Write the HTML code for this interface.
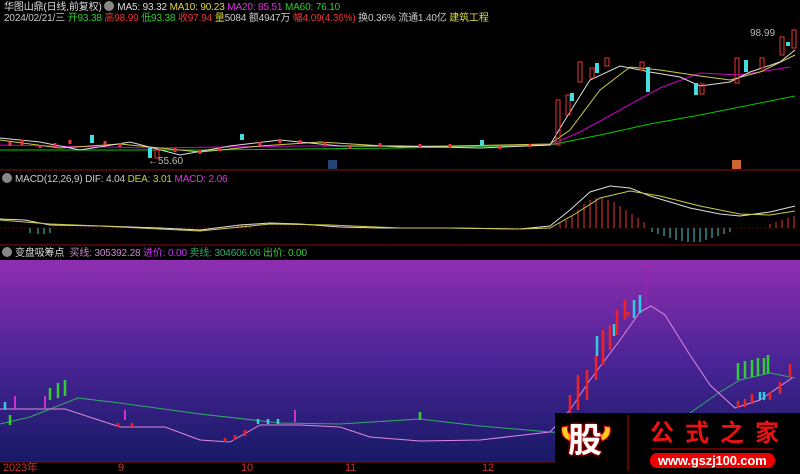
<!DOCTYPE html>
<html><head><meta charset="utf-8"><style>
body{margin:0;width:800px;height:473px;background:#000;overflow:hidden;position:relative;font-family:"Liberation Sans","Noto Sans CJK SC",sans-serif;font-size:10px;color:#ccc}
.t{position:absolute;white-space:nowrap;line-height:12px;letter-spacing:-0.15px}
.ic{display:inline-block;width:10px;height:10px;border-radius:50%;background:#888;vertical-align:-1px;margin-right:3px}
</style></head><body>
<svg width="800" height="473" style="position:absolute;left:0;top:0">
<defs><linearGradient id="g" x1="0" y1="0" x2="0" y2="1"><stop offset="0" stop-color="#8e2eb0"/><stop offset="0.5" stop-color="#4a2496"/><stop offset="1" stop-color="#171a66"/></linearGradient></defs>
<line x1="0" y1="170" x2="800" y2="170" stroke="#8a1010"/>
<line x1="0" y1="245" x2="800" y2="245" stroke="#8a1010"/>
<rect x="0" y="260" width="800" height="202" fill="url(#g)"/>
<line x1="0" y1="462" x2="800" y2="462" stroke="#8a1010"/>
<polyline fill="none" stroke="#0c0" points="0,150 200,150 400,148 550,145 600,135 650,124 700,115 750,105 795,96"/>
<polyline fill="none" stroke="#c0c" points="0,145 150,148 300,146 450,146 550,145 580,132 620,110 660,88 700,73 740,75 790,67"/>
<polyline fill="none" stroke="#cc4" points="0,140 60,148 120,144 200,152 260,146 320,142 400,147 550,144 570,130 600,90 630,67 660,70 700,76 730,80 760,72 795,55"/>
<polyline fill="none" stroke="#ddd" points="0,138 40,142 80,150 130,142 180,155 230,146 280,140 340,146 400,146 480,148 550,145 565,120 590,80 620,66 650,72 680,77 700,86 730,82 750,72 780,62 795,50"/>
<g stroke="#e33" fill="none">
<rect x="556" y="100" width="4" height="45"/><rect x="566" y="95" width="4" height="20"/><rect x="578" y="62" width="4" height="20"/><rect x="590" y="68" width="4" height="10"/><rect x="605" y="58" width="4" height="8"/><rect x="640" y="62" width="4" height="8"/><rect x="700" y="84" width="4" height="10"/><rect x="735" y="58" width="4" height="25"/><rect x="760" y="58" width="4" height="10"/><rect x="780" y="37" width="4" height="18"/><rect x="792" y="30" width="4" height="18"/><rect x="155" y="150" width="4" height="8"/>
</g>
<g fill="#4dd"><rect x="570" y="93" width="4" height="8"/><rect x="595" y="63" width="4" height="10"/><rect x="646" y="67" width="4" height="25"/><rect x="694" y="83" width="4" height="12"/><rect x="744" y="60" width="4" height="12"/><rect x="786" y="42" width="4" height="4"/><rect x="148" y="148" width="4" height="10"/><rect x="90" y="135" width="4" height="8"/><rect x="240" y="134" width="4" height="6"/><rect x="480" y="140" width="4" height="5"/></g>
<g stroke="#e33" stroke-width="3"><path d="M10 142v4M22 140v5M40 145v3M55 143v4M70 140v4M105 141v4M120 143v4M175 148v4M200 150v4M220 147v4M260 142v4M280 139v4M300 140v3M325 142v4M350 146v3M380 143v4M420 144v3M450 144v4M500 146v3M530 144v3"/></g>
<text x="750" y="36" fill="#bbb" font-size="10" font-family="Liberation Sans">98.99</text>
<text x="148" y="164" fill="#bbb" font-size="10" font-family="Liberation Sans">←55.60</text>
<rect x="328" y="160" width="9" height="9" fill="#247"/><rect x="732" y="160" width="9" height="9" fill="#c63"/>
<line x1="0" y1="228" x2="800" y2="228" stroke="#600" stroke-dasharray="2,2"/>
<g stroke="#e33"><path d="M560 228v-5M566 228v-8M572 228v-12M578 228v-18M584 228v-24M590 228v-28M596 228v-30M602 228v-30M608 228v-28M614 228v-26M620 228v-22M626 228v-18M632 228v-14M638 228v-10M644 228v-6M238 228v-3M242 228v-4M246 228v-4M250 228v-3M770 228v-4M776 228v-6M782 228v-8M788 228v-10M794 228v-12"/></g>
<g stroke="#4cc"><path d="M652 228v4M658 228v6M664 228v8M670 228v10M676 228v12M682 228v13M688 228v14M694 228v14M700 228v14M706 228v12M712 228v10M718 228v8M724 228v6M730 228v4M30 228v5M38 228v6M44 228v6M50 228v5"/></g>
<polyline fill="none" stroke="#ddd" points="0,219 25,220 50,225 100,226 160,228 200,230 240,225 270,223 300,224 340,227 380,228 450,228 520,229 550,226 570,210 590,192 610,186 630,188 650,196 690,208 720,214 740,216 770,212 795,206"/>
<polyline fill="none" stroke="#cc4" points="0,220 50,224 100,226 200,231 240,227 270,224 330,225 400,228 450,228 520,229 550,228 575,214 600,198 630,191 660,196 700,206 740,214 770,215 795,211"/>
<polyline fill="none" stroke="#3a6" points="0,424 30,417 78,398 120,403 200,414 280,423 340,424 420,419 480,426 550,432 640,438 690,413 720,392 740,380 770,373 795,378"/>
<polyline fill="none" stroke="#d8d" points="0,409 65,409 120,427 165,427 200,440 230,442 260,425 300,425 340,427 370,437 420,441 480,440 550,432 570,410 590,380 620,340 640,312 651,306 665,315 690,355 710,385 735,408 760,400 792,378"/>
<line x1="646" y1="262" x2="646" y2="306" stroke="#a2a"/>
<g stroke="#e22" stroke-width="2.5"><path d="M570 420v-25M578 410v-35M587 400v-30M596 380v-25M603 365v-35M610 350v-25M617 335v-25M625 320v-20M628 316v-4M738 408v-7M745 407v-8M752 404v-10M770 400v-8M780 394v-12M790 378v-14M118 427v-4M132 427v-4M225 442v-4M235 440v-5M245 436v-6"/></g>
<g stroke="#3cd" stroke-width="2.5"><path d="M597 356v-20M614 336v-12M634 318v-18M640 313v-18M760 400v-8M764 400v-8M5 410v-8M258 424v-5M268 424v-5M278 424v-5"/></g>
<g stroke="#3c3" stroke-width="2.5"><path d="M738 380v-17M745 378v-17M752 377v-17M758 376v-18M764 374v-16M768 373v-18M50 400v-12M58 398v-15M65 396v-16M10 425v-10M420 420v-8"/></g>
<g stroke="#c3c" stroke-width="2"><path d="M15 410v-14M45 408v-12M125 420v-10M295 422v-12"/></g>
<rect x="555" y="413" width="245" height="60" fill="#000"/>
<path d="M562 427 q-2 10 8 14 l2-6 q-6-2-4-9z M610 427 q2 10-8 14 l-2-6 q6-2 4-9z" fill="#fc2" stroke="#e00"/>
<line x1="628" y1="415" x2="628" y2="471" stroke="#b00"/>
<rect x="651" y="448" width="122" height="2" fill="#600"/>
<rect x="650" y="453" width="125" height="15" rx="7" fill="#e00"/>
</svg>
<div class="t" style="left:4px;top:1px;color:#ddd"><span>华图山鼎(日线,前复权)</span> <span class="ic"></span><span style="color:#ddd">MA5: 93.32</span> <span style="color:#dd4">MA10: 90.23</span> <span style="color:#d3d">MA20: 85.51</span> <span style="color:#3c3">MA60: 76.10</span></div>
<div class="t" style="left:4px;top:13px;color:#ccc">2024/02/21/三 <span style="color:#3c3">开93.38</span> <span style="color:#e33">高98.99</span> <span style="color:#3c3">低93.38</span> <span style="color:#e33">收97.94</span> <span style="color:#cc4">量</span>5084 额4947万 <span style="color:#e33">幅4.09(4.36%)</span> 换0.36% 流通1.40亿 <span style="color:#dd4">建筑工程</span></div>
<div class="t" style="left:2px;top:173px"><span class="ic"></span>MACD(12,26,9) DIF: 4.04 <span style="color:#cc4">DEA: 3.01</span> <span style="color:#d3d">MACD: 2.06</span></div>
<div class="t" style="left:2px;top:247px"><span class="ic"></span><span style="color:#ddd">变盘吸筹点</span> &nbsp;<span style="color:#c8c">买线: 305392.28</span> <span style="color:#c3f">进价: 0.00</span> <span style="color:#3a6">卖线: 304606.06</span> <span style="color:#3c3">出价: 0.00</span></div>
<div class="t" style="left:3px;top:462px;color:#c33;font-size:11px">2023年</div>
<div class="t" style="left:118px;top:462px;color:#c33;font-size:11px">9</div>
<div class="t" style="left:241px;top:462px;color:#c33;font-size:11px">10</div>
<div class="t" style="left:345px;top:462px;color:#c33;font-size:11px">11</div>
<div class="t" style="left:482px;top:462px;color:#c33;font-size:11px">12</div>
<div class="t" style="left:568px;top:421px;font-size:34px;line-height:40px;color:#fff;font-weight:bold;text-shadow:0 0 3px #e00,0 0 2px #e00">股</div>
<div class="t" style="left:650px;top:421px;font-size:24px;line-height:26px;color:#e11;font-weight:bold;letter-spacing:11px">公式之家</div>
<div class="t" style="left:658px;top:454px;font-size:13px;line-height:14px;color:#fff;font-weight:bold">www.gszj100.com</div>
</body></html>
